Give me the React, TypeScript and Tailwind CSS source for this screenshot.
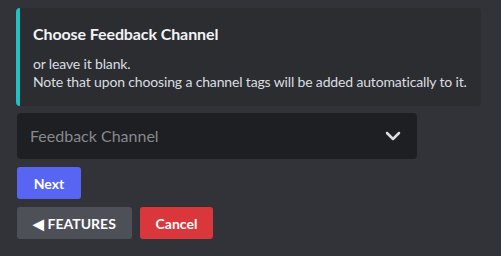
import { ChevronDown } from "lucide-react";

export default function App() {
  return (
    <div
      className="w-[501px] h-[256px] bg-[#313338] pt-2 pl-4"
      style={{ fontFamily: 'Lato, "Liberation Sans", sans-serif' }}
    >
      <div className="w-[465px] flex rounded bg-[#2b2d31] overflow-hidden">
        <div className="w-1 shrink-0 bg-[#1fc1c3]" />
        <div className="pl-[13px] pr-2 pt-[15px] pb-[15px]">
          <div className="text-[16px] leading-[22px] font-bold tracking-[-0.1px] text-[#f2f3f5]">
            Choose Feedback Channel
          </div>
          <div className="mt-[10px] text-[14px] leading-[18px] tracking-[-0.15px] text-[#dbdee1] whitespace-nowrap">
            <div>or leave it blank.</div>
            <div>Note that upon choosing a channel tags will be added automatically to it.</div>
          </div>
        </div>
      </div>

      <div className="mt-[7px] ml-px w-[400px] h-[46px] rounded bg-[#1e1f22] flex items-center justify-between pl-[13px] pr-3">
        <span className="text-[16px] text-[#87898c]">Feedback Channel</span>
        <ChevronDown className="w-6 h-6 text-[#dbdee1]" strokeWidth={2.5} />
      </div>

      <div className="mt-2 ml-px flex">
        <button className="w-16 h-8 rounded-[3px] bg-[#5865f2] text-white text-[14px] font-bold">
          Next
        </button>
      </div>

      <div className="mt-2 ml-px flex gap-2">
        <button className="w-[115px] h-8 rounded-[3px] bg-[#4e5058] text-white text-[14px] font-bold">
          ◀ FEATURES
        </button>
        <button className="w-[73px] h-8 rounded-[3px] bg-[#da373c] text-white text-[14px] font-bold">
          Cancel
        </button>
      </div>
    </div>
  );
}
